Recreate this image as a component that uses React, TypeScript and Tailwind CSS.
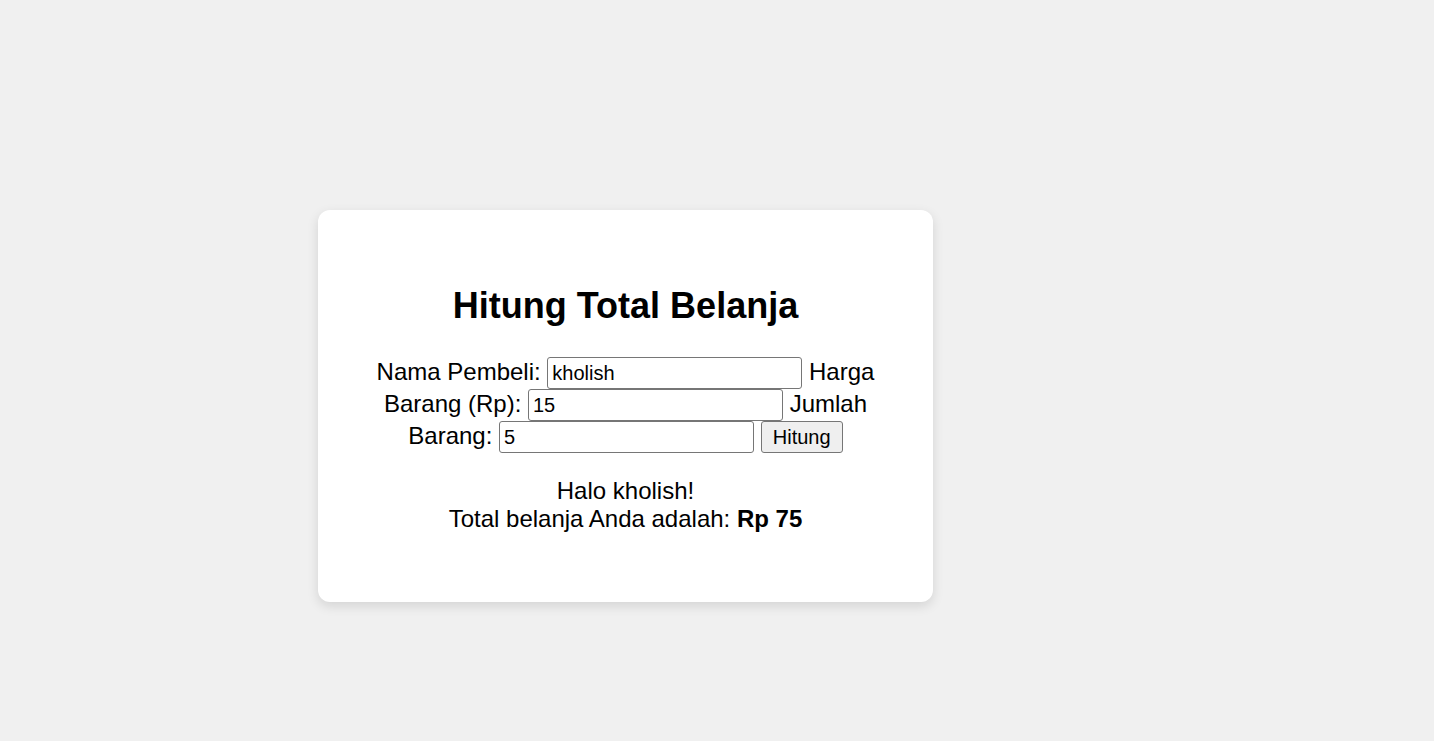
import React, { useState } from "react";

export default function App() {
  const [nama, setNama] = useState("kholish");
  const [harga, setHarga] = useState("15");
  const [jumlah, setJumlah] = useState("5");
  const [hasil, setHasil] = useState({ nama: "kholish", total: 75 });

  const hitung = () => {
    const total = (parseFloat(harga) || 0) * (parseFloat(jumlah) || 0);
    setHasil({ nama, total });
  };

  const inputCls =
    "inline-block align-top h-[32px] w-[255px] box-border rounded-[3px] border border-[#767676] bg-white px-[4px] text-[20px] leading-[22px] text-black outline-none";

  return (
    <div
      className="min-h-[741px] w-full bg-[#f0f0f0] pl-[318px] pt-[210px] text-black"
      style={{ fontFamily: '"Liberation Sans", Arial, sans-serif' }}
    >
      <div className="box-border w-[615px] h-[392px] rounded-[12px] bg-white px-[40px] pt-[75px] text-center shadow-[0_4px_12px_rgba(0,0,0,0.12)]">
        <h1 className="m-0 text-[36px] font-bold leading-[41px]">Hitung Total Belanja</h1>
        <div className="mt-[31px] text-[24px] leading-[30px]">
          Nama Pembeli:{" "}
          <input className={inputCls} value={nama} onChange={(e) => setNama(e.target.value)} />{" "}
          Harga Barang (Rp):{" "}
          <input className={inputCls} value={harga} onChange={(e) => setHarga(e.target.value)} />{" "}
          Jumlah Barang:{" "}
          <input className={inputCls} value={jumlah} onChange={(e) => setJumlah(e.target.value)} />{" "}
          <button
            onClick={hitung}
            className="inline-block align-top h-[32px] w-[82px] box-border rounded-[3px] border border-[#767676] bg-[#efefef] text-[20px] leading-[22px] text-black"
          >
            Hitung
          </button>
        </div>
        <div className="mt-[24px] text-[24px] leading-[27.6px]">
          <div>Halo {hasil.nama}!</div>
          <div>
            Total belanja Anda adalah: <b>Rp {hasil.total}</b>
          </div>
        </div>
      </div>
    </div>
  );
}
